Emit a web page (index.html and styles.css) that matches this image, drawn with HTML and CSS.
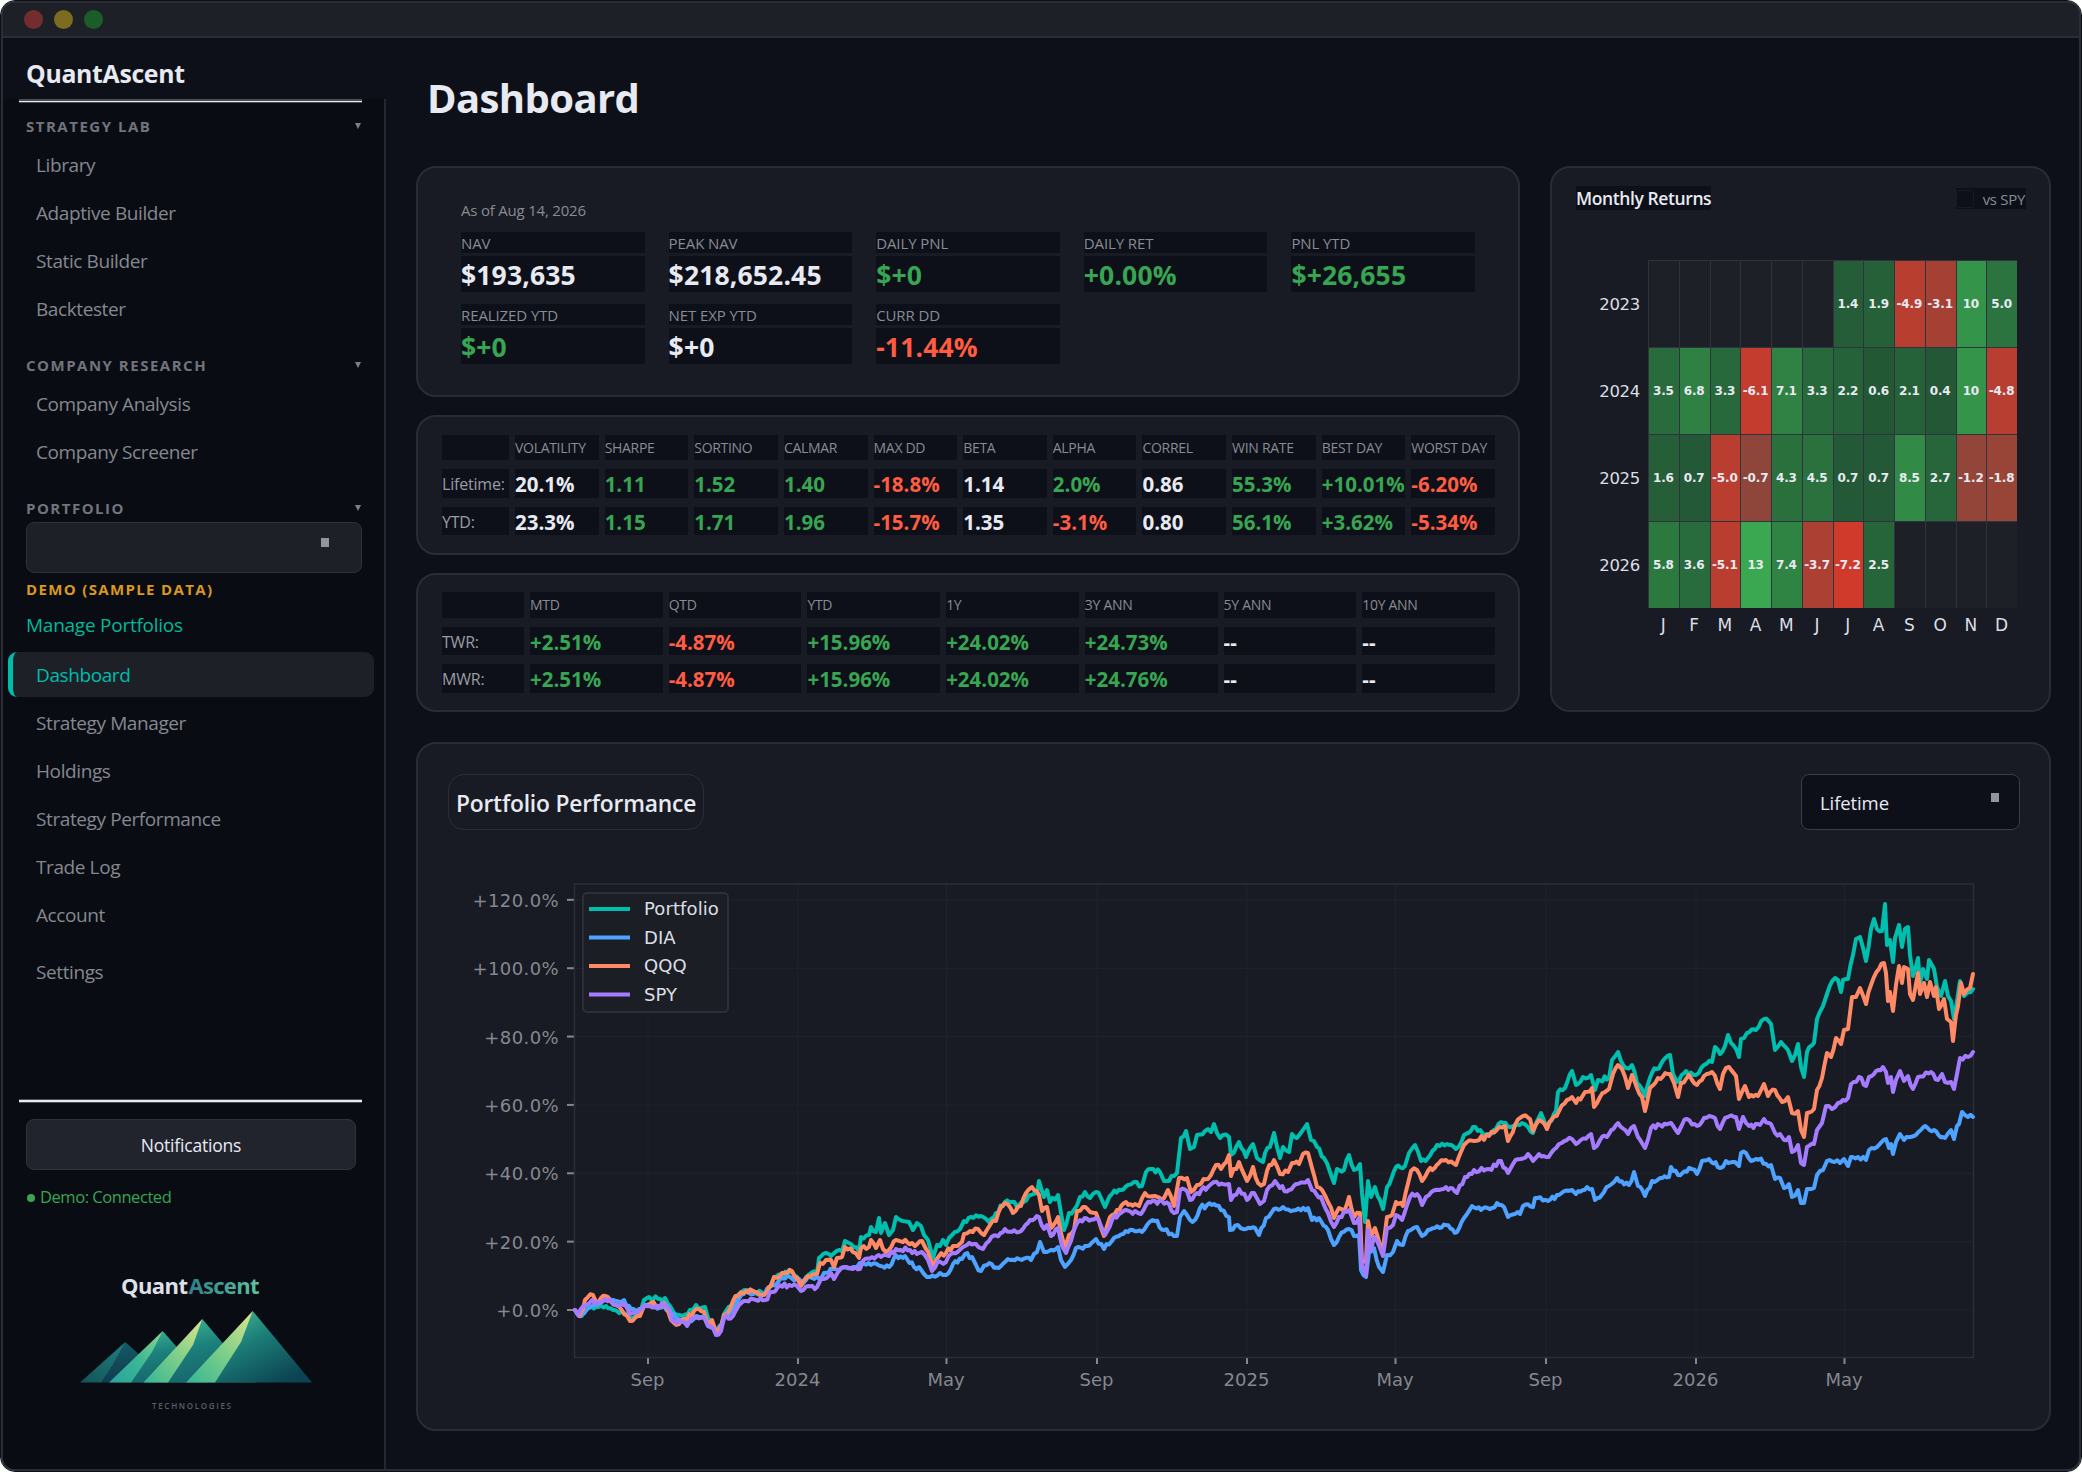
FILE: index.html
```html
<!DOCTYPE html>
<html lang="en">
<head>
  <meta charset="UTF-8" />
  <title>QuantAscent – Dashboard</title>
  <link rel="stylesheet" href="styles.css">
</head>
<body>
  <div class="window">
    <div class="titlebar"><i class="dot red"></i><i class="dot yellow"></i><i class="dot green"></i></div>

    <div class="app">
      <aside class="sidebar">
        <div class="brand">QuantAscent</div>
        <div class="side-body">
          <div class="rule"></div>
          <div class="section first">STRATEGY LAB<b></b></div>
          <nav>
            <a>Library</a><a>Adaptive Builder</a><a>Static Builder</a><a>Backtester</a>
          </nav>
          <div class="section">COMPANY RESEARCH<b></b></div>
          <nav>
            <a>Company Analysis</a><a>Company Screener</a>
          </nav>
          <div class="section">PORTFOLIO<b></b></div>
          <div class="select account"><i></i></div>
          <div class="demo">DEMO (SAMPLE DATA)</div>
          <div class="manage">Manage Portfolios</div>
          <nav class="portfolio-nav">
            <a class="active">Dashboard</a><a>Strategy Manager</a><a>Holdings</a><a>Strategy Performance</a><a>Trade Log</a><a>Account</a>
            <a class="settings">Settings</a>
          </nav>

          <div class="side-foot">
            <div class="rule bold"></div>
            <button class="notify">Notifications</button>
            <div class="status"><i></i>Demo: Connected</div>
            <svg class="logo" viewBox="76 1265 240 150" width="240" height="150">
              <defs>
                <linearGradient id="word" x1="0" x2="1"><stop offset="0" stop-color="#2f8088"/><stop offset="1" stop-color="#5dc3a0"/></linearGradient>
                <linearGradient id="m1a" x1="1" y1="0" x2="0" y2="1"><stop offset="0" stop-color="#1f7f7d"/><stop offset="1" stop-color="#135257"/></linearGradient>
                <linearGradient id="m1b" x1="0" y1="0" x2="0" y2="1"><stop offset="0" stop-color="#135a64"/><stop offset="1" stop-color="#123b50"/></linearGradient>
                <linearGradient id="m2a" x1="1" y1="0" x2="0" y2="1"><stop offset="0" stop-color="#8ed58d"/><stop offset=".5" stop-color="#3db795"/><stop offset="1" stop-color="#27a59d"/></linearGradient>
                <linearGradient id="m3a" x1="1" y1="0" x2="0" y2="1"><stop offset="0" stop-color="#dfe58b"/><stop offset=".5" stop-color="#7fcf88"/><stop offset="1" stop-color="#36b596"/></linearGradient>
                <linearGradient id="shade" x1="0" y1="0" x2="0.3" y2="1"><stop offset="0" stop-color="#3cb893"/><stop offset=".5" stop-color="#1b7f7b"/><stop offset="1" stop-color="#17666b"/></linearGradient>
                <linearGradient id="shade4" x1="0" y1="0" x2="0.7" y2="1"><stop offset="0" stop-color="#46c296"/><stop offset=".45" stop-color="#1c7f78"/><stop offset="1" stop-color="#0c4453"/></linearGradient>
              </defs>
              <text x="121" y="1294" class="logo-word" textLength="67">Quant</text>
              <text x="188.500" y="1294" class="logo-word ascent" textLength="71">Ascent</text>
              <path fill="url(#m1b)" d="M125.300 1342 170 1382.500H100z"/>
              <path fill="url(#m1a)" d="M125.300 1342 113 1364 101 1382.500H80z"/>
              <path fill="url(#shade)" d="M162.700 1331 208 1382.500H130z"/>
              <path fill="url(#m2a)" d="M162.700 1331 152 1352 131 1382.500H109z"/>
              <path fill="url(#shade)" d="M202.300 1319 256 1382.500H168z"/>
              <path fill="url(#m3a)" d="M202.300 1319 193 1345 168 1382.500H143.500z"/>
              <path fill="url(#shade4)" d="M252.700 1311 312 1382.500H214z"/>
              <path fill="url(#m3a)" d="M252.700 1311 241 1342 215 1382.500H186z"/>
              <text x="152" y="1408.500" class="logo-sub" textLength="79">TECHNOLOGIES</text>
            </svg>
          </div>
        </div>
      </aside>

      <main>
        <h1>Dashboard</h1>
        <div class="board">
          <div class="stack">
            <section class="card summary">
              <div class="asof">As of Aug 14, 2026</div>
              <div class="metrics">
                <div><label>NAV</label><strong>$193,635</strong></div>
                <div><label>PEAK NAV</label><strong>$218,652.45</strong></div>
                <div><label>DAILY PNL</label><strong class="pos">$+0</strong></div>
                <div><label>DAILY RET</label><strong class="pos">+0.00%</strong></div>
                <div><label>PNL YTD</label><strong class="pos">$+26,655</strong></div>
                <div><label>REALIZED YTD</label><strong class="pos">$+0</strong></div>
                <div><label>NET EXP YTD</label><strong>$+0</strong></div>
                <div><label>CURR DD</label><strong class="neg">-11.44%</strong></div>
              </div>
            </section>

            <section class="card table risk">
              <span></span><span>VOLATILITY</span><span>SHARPE</span><span>SORTINO</span><span>CALMAR</span><span>MAX DD</span><span>BETA</span><span>ALPHA</span><span>CORREL</span><span>WIN RATE</span><span>BEST DAY</span><span>WORST DAY</span>
              <em>Lifetime:</em><b>20.1%</b><b class="pos">1.11</b><b class="pos">1.52</b><b class="pos">1.40</b><b class="neg">-18.8%</b><b>1.14</b><b class="pos">2.0%</b><b>0.86</b><b class="pos">55.3%</b><b class="pos">+10.01%</b><b class="neg">-6.20%</b>
              <em>YTD:</em><b>23.3%</b><b class="pos">1.15</b><b class="pos">1.71</b><b class="pos">1.96</b><b class="neg">-15.7%</b><b>1.35</b><b class="neg">-3.1%</b><b>0.80</b><b class="pos">56.1%</b><b class="pos">+3.62%</b><b class="neg">-5.34%</b>
            </section>

            <section class="card table periods">
              <span></span><span>MTD</span><span>QTD</span><span>YTD</span><span>1Y</span><span>3Y ANN</span><span>5Y ANN</span><span>10Y ANN</span>
              <em>TWR:</em><b class="pos">+2.51%</b><b class="neg">-4.87%</b><b class="pos">+15.96%</b><b class="pos">+24.02%</b><b class="pos">+24.73%</b><b>--</b><b>--</b>
              <em>MWR:</em><b class="pos">+2.51%</b><b class="neg">-4.87%</b><b class="pos">+15.96%</b><b class="pos">+24.02%</b><b class="pos">+24.76%</b><b>--</b><b>--</b>
            </section>
          </div>

          <section class="card monthly">
            <div class="monthly-head">
              <h2>Monthly Returns</h2>
              <div class="versus"><i></i>vs SPY</div>
            </div>
            <div class="heatmap" id="heatmap"></div>
          </section>

          <section class="card performance">
            <div class="perf-head">
              <h2>Portfolio Performance</h2>
              <div class="select range">Lifetime<i></i></div>
            </div>
            <svg id="chart" class="chart" viewBox="448 830 1572 570" width="1572" height="570"></svg>
          </section>
        </div>
      </main>
    </div>
  </div>
  <script src="script.js"></script>
</body>
</html>
```
FILE: styles.css
```css
* { box-sizing:border-box; }
body { margin:0; background:#fff; font-family:"Open Sans", "Noto Sans", sans-serif; color:#e8eaf2; overflow:hidden; }
h1, h2 { margin:0; }
.pos { color:#38a552; }
.neg { color:#ff5c43; }

.window { width:2080px; height:1470px; margin:1px; border:2px solid #2a2d35; outline:1px solid #0d0f17; border-radius:14px; background:#0d1018; overflow:hidden; display:flex; flex-direction:column; }
.titlebar { height:35px; background:#1e2027; border-bottom:2px solid #2a2d35; display:flex; gap:11px; padding:7px 0 0 21px; }
.dot { width:19px; height:19px; border-radius:50%; }
.red { background:#742d2e; }
.yellow { background:#7b6c20; }
.green { background:#1a5d29; }
.app { flex:1; display:flex; }

/* sidebar */
.sidebar { width:383px; display:flex; flex-direction:column; }
.brand { height:61px; padding:20px 0 0 23px; line-height:31px; font-size:24.800px; font-weight:700; letter-spacing:-.3px; }
.side-body { flex:1; background:#0a0c14; border-right:2px solid #24272f; display:flex; flex-direction:column; }
.rule { width:343px; height:4px; margin-left:16px; background:#e8eaf2; border:solid #4a4c56; border-width:2px 0 1px; }
.rule.bold { border-width:1px 0; }
.section { height:28px; margin:17px 0 0 23px; width:335px; display:flex; align-items:center; justify-content:space-between; font-size:15px; font-weight:700; letter-spacing:1.5px; color:#71747d; }
.section.first { margin-top:9px; }
.section b { border:solid transparent; border-width:6px 3.500px 0; border-top-color:#7c7f88; }
nav { display:flex; flex-direction:column; gap:3px; margin:2px 10px 3px 5px; }
nav a { height:45px; line-height:47px; padding-left:28px; font-size:19px; letter-spacing:-.4px; color:#85888f; }
nav .active { background:#1e2028; color:#00bcab; border-left:5px solid #00bcab; border-radius:9px; padding-left:23px; }
.portfolio-nav { margin-top:6px; }
.settings { margin-top:9px; }
.select { display:flex; justify-content:space-between; border-radius:8px; }
.select i { width:8px; height:9px; background:#9294a0; }
.account { width:336px; height:51px; margin-left:23px; background:#1e2028; border:1px solid #2e3139; padding:15px 32px 0 0; justify-content:flex-end; }
.demo { margin:2px 0 0 23px; line-height:28px; font-size:15px; font-weight:700; letter-spacing:1.35px; color:#da981e; }
.manage { margin-left:23px; line-height:45px; height:43px; font-size:19px; letter-spacing:-.25px; color:#00b99a; }
.side-foot { margin-top:auto; height:370px; display:flex; flex-direction:column; }
.notify { width:330px; height:51px; margin:16px 0 0 23px; background:#22242d; border:1px solid #30333b; border-radius:8px; font:17.500px "Open Sans", sans-serif; letter-spacing:-.2px; color:#e8eaf2; }
.status { margin:13px 0 0 24px; line-height:28px; font-size:16.500px; letter-spacing:-.45px; color:#38a552; display:flex; align-items:center; gap:5px; }
.status i { width:8px; height:8px; border-radius:50%; background:#38a552; margin-top:2px; }
.logo { margin:54px 0 0 73px; }
.logo-word { font-size:22px; font-weight:700; fill:#dfe1ea; }
.ascent { fill:url(#word); }
.logo-sub { font-size:8px; font-weight:600; fill:#5c5e66; }

/* main */
main { padding:35px 28px 0 30px; }
h1 { line-height:50px; height:48px; margin:0 0 45px 11px; font-size:40px; font-weight:700; letter-spacing:-.6px; }
.board { display:grid; grid-template-columns:1104px 501px; gap:30px; }
.stack { display:flex; flex-direction:column; gap:18px; }
.card { background:#181b23; border:2px solid #292c34; border-radius:20px; }

.summary { height:231px; padding:32px 43px 0; }
.asof { line-height:20px; margin-bottom:12px; font-size:15px; letter-spacing:-.2px; color:#888b94; }
.metrics { display:grid; grid-template-columns:repeat(5, 1fr); gap:12px 24px; }
.metrics div { display:flex; flex-direction:column; gap:3px; }
.metrics label { background:#0d1018; line-height:22px; height:21px; font-size:15px; letter-spacing:-.1px; color:#888b94; }
.metrics strong { background:#0d1018; line-height:38px; height:36px; font-size:26.500px; letter-spacing:.15px; }

.table { display:grid; gap:9px 6px; padding:18px 23px 0 24px; }
.table > * { background:#0d1018; overflow:hidden; white-space:nowrap; display:block; min-width:0; }
.table span { font-size:14px; line-height:26px; letter-spacing:-.3px; color:#888b94; }
.table em { font-style:normal; font-size:16px; line-height:30px; letter-spacing:-.2px; color:#999ca5; }
.table b { font-size:20.500px; line-height:31px; }
.risk { height:140px; grid-template-columns:67px repeat(11, 1fr); grid-template-rows:25px 29px 28px; }
.periods { height:139px; grid-template-columns:82px repeat(7, 1fr); grid-template-rows:26px 28px 29px; padding-top:17px; }

.monthly { padding:18px 23px 0 24px; }
.monthly-head { display:flex; justify-content:space-between; align-items:flex-start; }
.monthly h2 { background:#0d1018; line-height:25px; height:24px; font-size:17.500px; font-weight:600; letter-spacing:-.4px; }
.versus { background:#0d1018; height:21px; display:flex; align-items:center; gap:9px; padding-right:1px; margin-top:2px; font-size:15px; letter-spacing:-.3px; color:#888b94; }
.versus i { width:18px; height:18px; border:1px solid #171a22; border-radius:2px; }
.heatmap { display:grid; grid-template-columns:72px repeat(12, 1fr); grid-template-rows:repeat(4, 87px) 30px; margin:50px 9px 0 0; font-family:"DejaVu Sans", sans-serif; }
.heatmap > * { display:flex; align-items:center; justify-content:center; }
.year { justify-content:flex-end; padding:2px 8px 0 0; font-size:16.500px; color:#dcdee6; letter-spacing:-.3px; }
.cell { background:#1e2028; border:solid #30333d; border-width:1px 0 0 1px; padding-right:1px; font-size:12px; font-weight:700; white-space:nowrap; letter-spacing:-.1px; }
.month { font-size:17px; color:#dcdee6; padding-top:3px; }

.performance { grid-column:1 / 3; height:689px; padding:30px 29px 0 30px; }
.perf-head { display:flex; justify-content:space-between; }
.perf-head h2 { width:256px; height:56px; line-height:57px; border:1px solid #2b2e37; border-radius:16px; text-align:center; font-size:22.800px; font-weight:600; letter-spacing:-.2px; white-space:nowrap; }
.range { width:219px; height:56px; line-height:56px; background:#0d1018; border:1px solid #3a3d46; padding:0 20px 0 18px; font-size:18.500px; letter-spacing:-.1px; }
.range i { margin-top:18px; }
.chart { display:block; font:18px "DejaVu Sans", sans-serif; }
.grid-line { stroke:#1e2129; stroke-width:1.500; }
.frame { fill:none; stroke:#2b2e36; stroke-width:1.500; }
.tick { stroke:#85888f; stroke-width:2; }
.tick-label { fill:#85888f; }
.percent { letter-spacing:.4px; }
.series { fill:none; stroke-width:4; stroke-linejoin:round; stroke-linecap:round; }
.legend-box { fill:#1c1e26; stroke:#2c2f38; stroke-width:2; }
.legend-label { fill:#dcdee6; letter-spacing:.1px; }
```
FILE: script.js
```js
// monthly returns, null = no data
const returns = {
  2023: [null, null, null, null, null, null, '1.4', '1.9', '-4.9', '-3.1', '10', '5.0'],
  2024: ['3.5', '6.8', '3.3', '-6.1', '7.1', '3.3', '2.2', '0.6', '2.1', '0.4', '10', '-4.8'],
  2025: ['1.6', '0.7', '-5.0', '-0.7', '4.3', '4.5', '0.7', '0.7', '8.5', '2.7', '-1.2', '-1.8'],
  2026: ['5.8', '3.6', '-5.1', '13', '7.4', '-3.7', '-7.2', '2.5', null, null, null, null]
};

function heat(v) {
  const mix = (a, b, t) => a.map((c, i) => Math.round(c + (b[i] - c) * t));
  const c = v > 0 ? mix([34, 84, 52], [57, 168, 80], v / 13) : mix([134, 71, 59], [207, 58, 43], -v / 7.2);
  return `rgb(${c})`;
}

let cells = '';
for (const year in returns) {
  cells += `<div class="year">${year}</div>`;
  returns[year].forEach(v => {
    cells += v === null ? '<div class="cell"></div>' : `<div class="cell" style="background:${heat(+v)}">${v}</div>`;
  });
}
cells += '<div></div>' + [...'JFMAMJJASOND'].map(m => `<div class="month">${m}</div>`).join('');
document.getElementById('heatmap').innerHTML = cells;

// performance chart
const series = [
  { name: 'Portfolio', color: '#00bfae', points: '575,1310 579,1315 587,1309 596,1307 606,1306 615,1310 624,1313 630,1318 639,1314 644,1300 649,1297 660,1299 665,1298 670,1306 674,1313 679,1315 683,1316 690,1310 696,1305 699,1309 705,1307 708,1318 714,1328 716,1334 721,1327 724,1314 731,1306 734,1301 739,1294 746,1290 755,1292 764,1294 769,1289 774,1278 781,1275 792,1272 797,1277 801,1285 806,1277 811,1273 817,1273 819,1258 826,1253 831,1256 839,1250 842,1251 845,1241 851,1244 859,1251 861,1237 869,1235 871,1227 876,1232 879,1218 881,1233 885,1223 889,1235 893,1230 896,1217 903,1221 909,1222 913,1230 917,1223 921,1226 924,1235 928,1240 931,1251 933,1258 937,1245 940,1246 943,1240 946,1245 949,1238 955,1232 960,1229 964,1221 971,1217 981,1216 989,1222 996,1213 1005,1202 1019,1205 1024,1202 1031,1195 1037,1193 1039,1181 1044,1197 1047,1190 1050,1202 1058,1195 1061,1213 1064,1230 1069,1213 1074,1210 1080,1197 1085,1192 1090,1198 1096,1192 1101,1198 1105,1207 1112,1194 1121,1190 1128,1185 1134,1182 1142,1186 1146,1172 1151,1169 1160,1172 1164,1181 1169,1181 1174,1176 1177,1173 1181,1138 1186,1131 1190,1149 1194,1147 1197,1135 1205,1131 1211,1132 1214,1124 1220,1138 1223,1135 1229,1137 1231,1155 1239,1142 1246,1157 1253,1144 1257,1158 1263,1162 1265,1153 1270,1147 1274,1133 1280,1158 1283,1147 1289,1152 1292,1134 1297,1138 1303,1130 1307,1124 1311,1140 1317,1147 1324,1158 1330,1172 1334,1183 1337,1169 1344,1170 1349,1155 1354,1170 1360,1164 1362,1193 1365,1222 1368,1181 1371,1197 1375,1187 1380,1200 1383,1209 1387,1187 1396,1167 1405,1166 1409,1153 1415,1145 1421,1161 1428,1158 1437,1145 1447,1144 1456,1149 1464,1135 1473,1127 1485,1135 1496,1129 1501,1122 1510,1127 1522,1123 1528,1127 1533,1133 1541,1113 1547,1128 1556,1111 1558,1092 1565,1088 1572,1071 1576,1085 1583,1077 1591,1075 1595,1090 1598,1080 1609,1078 1612,1060 1618,1052 1621,1061 1626,1068 1632,1065 1637,1083 1645,1096 1652,1073 1661,1064 1670,1055 1673,1074 1677,1082 1686,1071 1696,1075 1704,1065 1712,1062 1715,1047 1720,1054 1725,1046 1728,1035 1734,1046 1739,1057 1741,1039 1747,1033 1756,1030 1764,1019 1771,1024 1775,1050 1781,1042 1788,1050 1792,1061 1798,1044 1801,1067 1804,1077 1807,1052 1814,1043 1817,1019 1823,1006 1827,994 1835,978 1838,980 1841,992 1843,980 1848,979 1853,955 1856,939 1860,937 1866,961 1871,929 1874,919 1877,929 1882,931 1885,904 1887,945 1890,940 1893,962 1895,938 1899,925 1902,947 1905,929 1908,927 1910,955 1913,976 1918,958 1920,983 1923,969 1927,979 1929,960 1934,969 1937,987 1941,996 1945,981 1948,996 1951,1001 1954,1019 1957,1001 1960,981 1964,996 1968,992 1973,989' },
  { name: 'DIA', color: '#4da3ff', points: '575,1310 579,1316 588,1308 597,1305 606,1299 613,1300 624,1300 631,1309 639,1309 645,1305 655,1307 664,1306 669,1310 676,1318 680,1320 687,1322 696,1316 704,1316 708,1326 717,1330 724,1318 731,1312 739,1299 746,1291 755,1293 765,1293 772,1285 778,1282 790,1277 801,1281 812,1278 819,1279 824,1273 835,1269 844,1267 853,1267 864,1264 878,1265 889,1267 894,1258 905,1256 914,1267 919,1267 924,1274 930,1277 940,1273 946,1275 953,1264 962,1259 965,1254 972,1257 976,1265 981,1271 987,1265 1001,1266 1010,1260 1031,1260 1037,1252 1040,1242 1044,1252 1049,1251 1058,1247 1061,1260 1065,1267 1071,1260 1076,1248 1085,1246 1096,1239 1104,1249 1114,1238 1128,1232 1142,1232 1147,1225 1155,1221 1164,1230 1174,1236 1177,1236 1180,1217 1184,1211 1190,1220 1195,1220 1200,1208 1207,1205 1214,1204 1221,1210 1229,1217 1230,1230 1238,1225 1246,1229 1255,1228 1259,1235 1266,1218 1274,1209 1283,1207 1296,1210 1308,1208 1312,1220 1319,1218 1328,1230 1334,1245 1339,1237 1349,1229 1354,1236 1359,1235 1361,1270 1366,1277 1369,1253 1374,1248 1379,1267 1383,1272 1387,1255 1393,1252 1397,1241 1403,1245 1408,1231 1417,1227 1422,1236 1428,1230 1446,1225 1457,1232 1464,1218 1472,1206 1481,1210 1492,1208 1497,1203 1504,1207 1508,1217 1515,1214 1520,1214 1523,1206 1533,1207 1535,1198 1548,1201 1559,1195 1572,1190 1576,1194 1587,1187 1592,1189 1595,1200 1604,1192 1609,1186 1617,1178 1629,1185 1634,1172 1638,1186 1645,1196 1652,1181 1660,1178 1669,1177 1671,1167 1678,1175 1689,1168 1697,1174 1702,1161 1709,1159 1720,1168 1726,1161 1735,1162 1739,1166 1741,1153 1746,1153 1751,1161 1756,1159 1771,1165 1775,1179 1780,1178 1784,1188 1789,1184 1792,1197 1798,1190 1801,1203 1804,1203 1807,1189 1814,1188 1817,1175 1823,1170 1827,1161 1840,1163 1844,1159 1848,1166 1851,1157 1858,1157 1866,1160 1869,1150 1877,1147 1886,1139 1889,1148 1891,1144 1893,1154 1896,1142 1900,1134 1904,1140 1914,1136 1925,1126 1934,1130 1945,1138 1951,1130 1954,1139 1957,1126 1959,1124 1962,1112 1968,1117 1973,1117' },
  { name: 'QQQ', color: '#ff8a65', points: '575,1310 579,1316 583,1309 585,1300 593,1295 596,1302 601,1298 608,1297 614,1305 621,1309 624,1314 630,1321 635,1318 640,1316 644,1306 651,1303 656,1306 664,1303 667,1308 671,1320 679,1324 687,1319 696,1309 704,1312 707,1322 712,1320 716,1332 721,1327 724,1315 730,1309 733,1301 738,1296 746,1291 755,1292 764,1295 771,1286 774,1277 782,1273 792,1271 797,1278 801,1286 808,1276 817,1274 820,1263 826,1260 831,1260 834,1267 837,1258 842,1257 845,1247 853,1252 859,1258 861,1248 869,1247 871,1240 876,1248 880,1240 883,1249 889,1250 896,1240 903,1242 912,1243 915,1246 922,1241 926,1249 933,1265 939,1256 946,1253 953,1246 962,1242 964,1234 970,1231 978,1229 984,1235 990,1225 996,1221 1001,1207 1005,1203 1013,1213 1021,1206 1026,1193 1032,1187 1039,1195 1042,1211 1047,1207 1051,1228 1058,1217 1061,1233 1065,1248 1069,1235 1074,1230 1077,1211 1083,1207 1090,1212 1096,1213 1104,1236 1110,1217 1117,1210 1126,1202 1135,1204 1139,1206 1145,1193 1155,1196 1164,1198 1168,1190 1174,1206 1179,1178 1187,1178 1191,1192 1197,1185 1208,1179 1216,1165 1221,1169 1229,1155 1231,1176 1239,1162 1247,1181 1253,1167 1258,1183 1264,1184 1267,1171 1274,1160 1280,1174 1288,1172 1292,1163 1299,1164 1303,1154 1308,1153 1312,1168 1317,1187 1322,1190 1328,1202 1334,1218 1339,1208 1344,1211 1349,1197 1354,1217 1360,1213 1362,1263 1366,1260 1368,1221 1371,1236 1375,1228 1380,1245 1383,1248 1387,1217 1392,1215 1396,1202 1403,1206 1411,1171 1417,1170 1422,1181 1428,1171 1439,1163 1446,1160 1456,1165 1464,1145 1474,1141 1489,1136 1499,1127 1505,1126 1508,1141 1515,1125 1523,1116 1530,1119 1533,1131 1539,1120 1547,1129 1552,1119 1559,1111 1567,1100 1572,1097 1576,1103 1585,1092 1592,1088 1594,1107 1600,1097 1609,1089 1613,1074 1618,1065 1622,1069 1628,1088 1632,1075 1637,1088 1642,1097 1645,1111 1650,1088 1658,1078 1670,1074 1674,1083 1678,1097 1681,1083 1689,1075 1697,1085 1704,1076 1712,1072 1720,1089 1723,1074 1729,1067 1736,1076 1739,1099 1745,1086 1749,1097 1758,1096 1764,1084 1768,1096 1775,1090 1782,1102 1788,1097 1792,1113 1798,1111 1801,1130 1804,1137 1807,1113 1814,1109 1817,1090 1822,1078 1827,1053 1831,1057 1836,1038 1841,1044 1844,1030 1848,1029 1852,997 1856,997 1860,988 1866,1004 1871,985 1879,969 1884,963 1886,973 1888,1001 1890,992 1893,1011 1896,985 1899,966 1902,983 1904,967 1908,969 1910,994 1913,1000 1918,973 1920,994 1924,983 1927,997 1930,982 1934,996 1936,987 1939,1009 1944,999 1947,1019 1951,1022 1953,1041 1956,1015 1958,1006 1961,983 1964,994 1970,988 1973,974' },
  { name: 'SPY', color: '#a57cff', points: '575,1310 578,1315 586,1305 592,1300 597,1302 605,1299 610,1299 615,1305 626,1306 630,1314 639,1311 645,1305 655,1307 664,1305 670,1311 672,1320 681,1322 687,1326 694,1318 704,1317 708,1326 713,1328 716,1335 721,1331 724,1318 733,1316 739,1305 746,1301 756,1300 765,1300 772,1292 778,1287 789,1285 797,1286 801,1291 808,1286 817,1287 821,1279 831,1273 834,1279 838,1272 846,1267 853,1269 860,1269 863,1261 872,1257 881,1257 889,1256 896,1249 910,1250 917,1254 922,1252 928,1260 932,1271 938,1261 946,1262 953,1253 963,1247 967,1245 976,1244 983,1249 989,1241 1005,1229 1019,1232 1030,1220 1039,1217 1044,1229 1047,1225 1051,1236 1058,1228 1062,1246 1066,1253 1071,1241 1074,1230 1080,1220 1096,1218 1101,1226 1105,1235 1112,1220 1121,1213 1135,1211 1141,1214 1146,1205 1155,1201 1169,1204 1174,1213 1177,1212 1180,1190 1187,1191 1190,1200 1197,1193 1208,1187 1214,1182 1229,1184 1231,1200 1239,1189 1247,1200 1254,1193 1260,1204 1264,1201 1267,1190 1275,1181 1280,1188 1289,1190 1296,1184 1308,1180 1312,1190 1321,1197 1328,1213 1334,1227 1339,1217 1349,1210 1354,1223 1359,1218 1362,1266 1366,1275 1368,1230 1371,1250 1374,1237 1380,1248 1383,1256 1387,1228 1393,1225 1396,1215 1402,1220 1410,1197 1417,1194 1422,1205 1426,1197 1439,1190 1446,1187 1457,1193 1465,1177 1474,1170 1489,1169 1501,1161 1508,1173 1513,1164 1528,1154 1533,1161 1539,1154 1546,1157 1556,1148 1559,1144 1572,1139 1576,1144 1591,1134 1594,1148 1600,1140 1609,1134 1618,1123 1628,1134 1634,1126 1638,1137 1645,1148 1651,1128 1660,1125 1671,1123 1678,1133 1682,1125 1687,1119 1697,1126 1709,1116 1715,1118 1720,1129 1725,1118 1736,1117 1739,1129 1743,1117 1749,1126 1760,1125 1764,1119 1771,1124 1775,1133 1780,1134 1784,1140 1789,1137 1792,1152 1798,1145 1801,1163 1804,1165 1807,1147 1814,1144 1817,1130 1822,1123 1826,1106 1832,1109 1838,1103 1848,1098 1851,1084 1859,1077 1866,1086 1869,1077 1883,1067 1886,1072 1888,1083 1891,1077 1893,1092 1896,1080 1900,1071 1904,1081 1908,1076 1913,1089 1918,1077 1931,1072 1938,1080 1942,1074 1945,1082 1951,1082 1954,1089 1957,1074 1960,1058 1968,1057 1973,1052' }
];

// daily noise between the turning points
let seed = 7;
function rand() {
  seed = (seed * 16807) % 2147483647;
  return seed / 2147483647 - 0.5;
}
function daily(points) {
  const pts = points.split(' ').map(p => p.split(',').map(Number));
  const out = [pts[0]];
  for (let i = 1; i < pts.length; i++) {
    const [x0, y0] = pts[i - 1], [x1, y1] = pts[i];
    const n = Math.floor((x1 - x0) / 2.2);
    for (let k = 1; k < n; k++) {
      out.push([x0 + (x1 - x0) * k / n, y0 + (y1 - y0) * k / n + rand() * 5]);
    }
    out.push([x1, y1]);
  }
  return out.map(p => p[0].toFixed(1) + ',' + p[1].toFixed(1)).join(' ');
}

const left = 574.5, right = 1973.5, top_ = 884, bottom = 1357.5;
const months = [['Sep', 648], ['2024', 798], ['May', 946.5], ['Sep', 1097], ['2025', 1247], ['May', 1395.5], ['Sep', 1546], ['2026', 1696], ['May', 1844.5]];
let svg = '';
for (let v = 0; v <= 120; v += 20) {
  const y = 1310 - v * 3.418;
  svg += `<line class="grid-line" x1="${left}" x2="${right}" y1="${y}" y2="${y}"/>`;
  svg += `<line class="tick" x1="567" x2="574" y1="${y}" y2="${y}"/>`;
  svg += `<text class="tick-label percent" x="559" y="${y + 7}" text-anchor="end">+${v}.0%</text>`;
}
months.forEach(([label, x]) => {
  svg += `<line class="grid-line" x1="${x}" x2="${x}" y1="${top_}" y2="${bottom}"/>`;
  svg += `<line class="tick" x1="${x}" x2="${x}" y1="1358" y2="1364"/>`;
  svg += `<text class="tick-label" x="${x - 0.5}" y="1386" text-anchor="middle">${label}</text>`;
});
svg += `<rect class="frame" x="${left}" y="${top_}" width="${right - left}" height="${bottom - top_}"/>`;
series.forEach(s => {
  svg += `<polyline class="series" stroke="${s.color}" points="${daily(s.points)}"/>`;
});
svg += '<rect class="legend-box" x="583" y="893" width="145" height="119" rx="4"/>';
series.forEach((s, i) => {
  const y = 909 + i * 28.5;
  svg += `<line x1="589" x2="630" y1="${y}" y2="${y}" stroke="${s.color}" stroke-width="4"/>`;
  svg += `<text class="legend-label" x="644" y="${y + 6}">${s.name}</text>`;
});
document.getElementById('chart').innerHTML = svg;
```
